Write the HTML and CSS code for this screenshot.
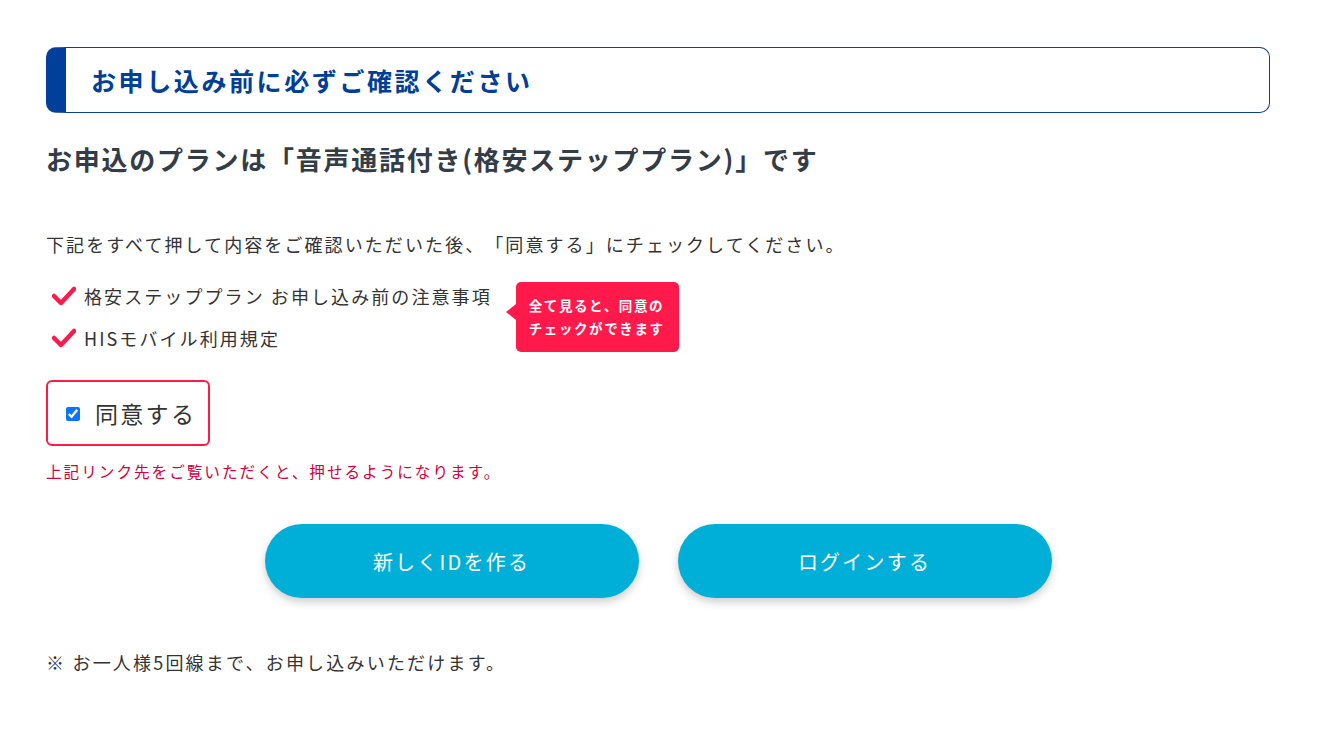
FILE: index.html
```html
<!DOCTYPE html>
<html lang="ja">
<head>
<meta charset="utf-8">
<link rel="stylesheet" href="styles.css">
</head>
<body>
<div class="page">
  <h2 class="section-title">お申し込み前に必ずご確認ください</h2>
  <h3 class="plan">お申込のプランは「音声通話付き(格安ステッププラン)」です</h3>
  <p class="lead">下記をすべて押して内容をご確認いただいた後、「同意する」にチェックしてください。</p>
  <div class="links-row">
    <ul class="links">
      <li><svg class="check" viewBox="0 0 24 20"><path d="M2 10 L9 17 L22 3" fill="none" stroke="#ff1a4b" stroke-width="4.5" stroke-linecap="round" stroke-linejoin="round"/></svg>格安ステッププラン お申し込み前の注意事項</li>
      <li><svg class="check" viewBox="0 0 24 20"><path d="M2 10 L9 17 L22 3" fill="none" stroke="#ff1a4b" stroke-width="4.5" stroke-linecap="round" stroke-linejoin="round"/></svg>HISモバイル利用規定</li>
    </ul>
    <div class="tip">全て見ると、同意の<br>チェックができます</div>
  </div>
  <label class="agree"><input type="checkbox" checked><span>同意する</span></label>
  <p class="note">上記リンク先をご覧いただくと、押せるようになります。</p>
  <div class="buttons">
    <button class="btn">新しくIDを作る</button>
    <button class="btn">ログインする</button>
  </div>
  <p class="foot">※ お一人様5回線まで、お申し込みいただけます。</p>
</div>
</body>
</html>
```
FILE: styles.css
```css
* { box-sizing: border-box; }
body {
  margin: 0;
  background: #fff;
  font-family: "Noto Sans CJK JP", "Noto Sans", sans-serif;
  color: #333;
  letter-spacing: 2.08px;
  text-spacing-trim: space-all;
}
.page {
  width: 1224px;
  margin: 0 0 0 46px;
  padding-top: 47px;
}
.section-title {
  margin: 0;
  height: 66px;
  border: 1px solid #0b3f8f;
  border-left: 20px solid #00409a;
  border-radius: 10px;
  color: #003f98;
  font-size: 25px;
  font-weight: 700;
  letter-spacing: 2.6px;
  line-height: 64px;
  padding-left: 25px;
}
.plan {
  margin: 28px 0 0;
  font-size: 26px;
  font-weight: 700;
  letter-spacing: 1.75px;
  color: #333d47;
  line-height: 36px;
}
.lead {
  margin: 53px 0 0;
  font-size: 18px;
  line-height: 28px;
  color: #333;
}
.links-row {
  display: flex;
  align-items: flex-start;
  margin-top: 17px;
}
.links {
  list-style: none;
  margin: 0;
  padding: 0;
}
.links li {
  display: flex;
  align-items: center;
  font-size: 18px;
  line-height: 28px;
  height: 42px;
  color: #333;
}
.check {
  width: 24px;
  height: 20px;
  margin: 0 8px 0 6px;
}
.tip {
  position: relative;
  margin: 7px 0 0 24px;
  background: #ff1a4b;
  color: #fff;
  font-size: 13.5px;
  font-weight: 700;
  letter-spacing: 1.6px;
  line-height: 23px;
  padding: 12px 14px 12px 13px;
  border-radius: 5px;
}
.tip::before {
  content: "";
  position: absolute;
  left: -10px;
  top: 22px;
  border-top: 8px solid transparent;
  border-bottom: 8px solid transparent;
  border-right: 10px solid #ff1a4b;
}
.agree {
  display: inline-flex;
  align-items: center;
  margin-top: 21px;
  height: 66px;
  padding: 0 12px 0 18px;
  border: 2px solid #ff1a4b;
  border-radius: 6px;
  font-size: 23px;
  letter-spacing: 2.3px;
  color: #333;
}
.agree input {
  width: 14px;
  height: 14px;
  margin: 2px 15px 0 0;
  accent-color: #0b75ff;
}
.note {
  margin: 12px 0 0;
  font-size: 15.6px;
  letter-spacing: 2px;
  color: #d4003c;
  line-height: 26px;
}
.buttons {
  display: flex;
  justify-content: center;
  gap: 39px;
  margin-top: 40px;
}
.btn {
  width: 374px;
  height: 74px;
  border: none;
  border-radius: 37px;
  background: #00afd7;
  color: #fff;
  font-family: inherit;
  font-size: 20px;
  letter-spacing: 2.2px;
  box-shadow: 0 4px 8px rgba(0,0,0,0.2);
}
.foot {
  margin: 50px 0 0;
  font-size: 18px;
  letter-spacing: 2.2px;
  line-height: 28px;
  color: #333;
}
```
